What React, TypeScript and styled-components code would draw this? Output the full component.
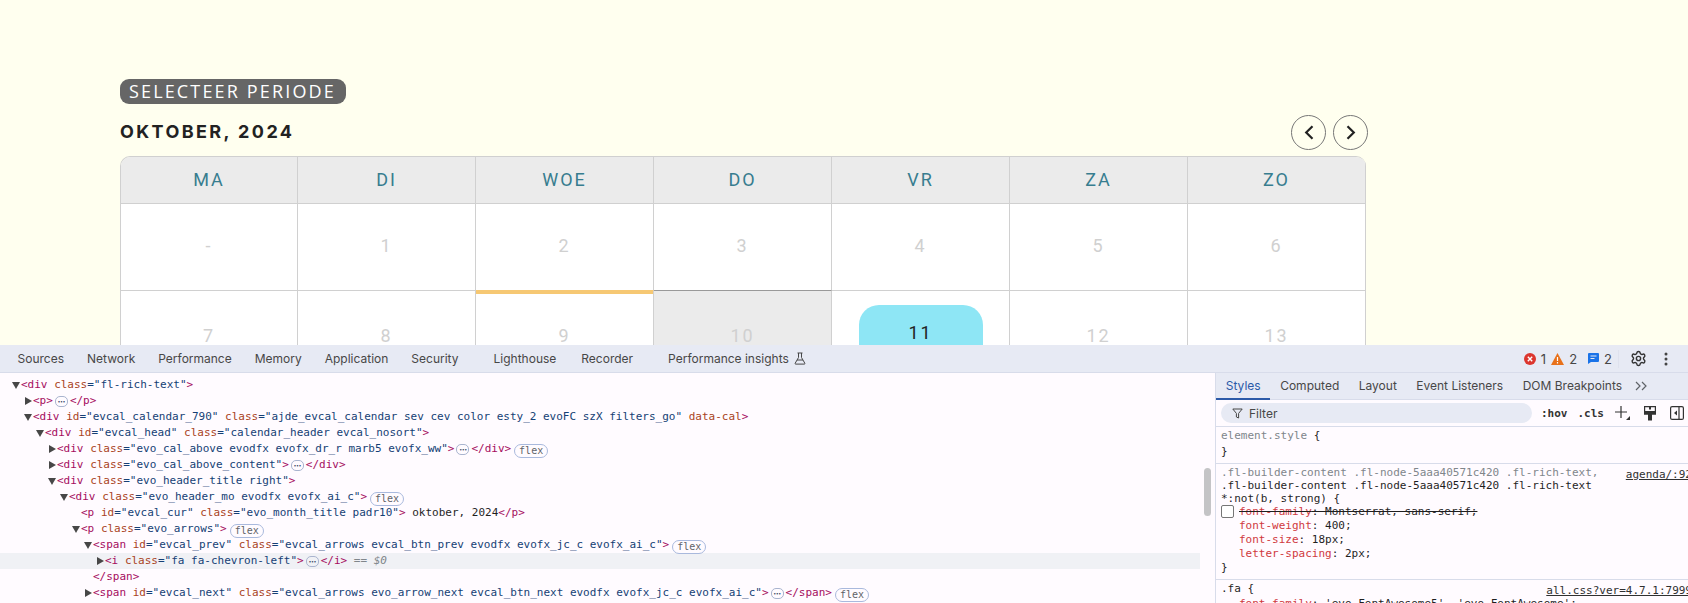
import * as React from 'react';
import styled, { createGlobalStyle } from 'styled-components';
import { Settings } from 'lucide-react';

const GlobalStyle = createGlobalStyle`
    html, body {
        margin: 0;
        padding: 0;
        height: 603px;
        overflow: hidden;
        background: #ffffef;
    }
    * {
        box-sizing: border-box;
    }
`

const days = ['MA', 'DI', 'WOE', 'DO', 'VR', 'ZA', 'ZO'];
const tabs = ['Sources', 'Network', 'Performance', 'Memory', 'Application', 'Security', 'Lighthouse', 'Recorder'];
const tabGaps: Record<string, number> = { Lighthouse: 12, Recorder: 2 };
const sideTabs = ['Styles', 'Computed', 'Layout', 'Event Listeners', 'DOM Breakpoints'];

function Attr({ name, value }: { name: string; value: string }) {
    return <> <AttrName>{name}</AttrName><AttrValue>="{value}"</AttrValue></>;
}

function Dots() {
    return <DotsBadge>···</DotsBadge>;
}

function TreeRow(props: { depth: number; arrow?: 'down' | 'right'; selected?: boolean; children: React.ReactNode }) {
    return (
        <Row $depth={props.depth} $selected={props.selected}>
            <ArrowBox>
                {props.arrow && (
                    <svg width="8" height="8" viewBox="0 0 8 8">
                        <path d={props.arrow === 'down' ? 'M0 1h8L4 8z' : 'M1 0v8l7-4z'} fill="#474747" />
                    </svg>
                )}
            </ArrowBox>
            <RowText>{props.children}</RowText>
        </Row>
    );
}

export default function App() {
    return (
        <Page>
            <GlobalStyle />
            <Site>
                <Pill>SELECTEER PERIODE</Pill>
                <MonthBar>
                    <MonthTitle>OKTOBER, 2024</MonthTitle>
                    <MonthArrows>
                        <RoundButton>
                            <svg width="10" height="15" viewBox="0 0 10 15"><path d="M8.5 1.2 2.2 7.5l6.3 6.3" fill="none" stroke="#222" strokeWidth="2.2" /></svg>
                        </RoundButton>
                        <RoundButton>
                            <svg width="10" height="15" viewBox="0 0 10 15"><path d="M1.5 1.2 7.8 7.5l-6.3 6.3" fill="none" stroke="#222" strokeWidth="2.2" /></svg>
                        </RoundButton>
                    </MonthArrows>
                </MonthBar>
                <Calendar>
                    <HeadRow>
                        {days.map((d) => <HeadCell key={d}>{d}</HeadCell>)}
                    </HeadRow>
                    <Week>
                        {['-', '1', '2', '3', '4', '5', '6'].map((n) => <DayCell key={n} $pad={32}>{n}</DayCell>)}
                    </Week>
                    <Week>
                        <DayCell $pad={35}>7</DayCell>
                        <DayCell $pad={35}>8</DayCell>
                        <DayCell $pad={35} $mark="event">9</DayCell>
                        <DayCell $pad={35} $mark="past">10</DayCell>
                        <DayCell $pad={14}><TodayBlock>11</TodayBlock></DayCell>
                        <DayCell $pad={35}>12</DayCell>
                        <DayCell $pad={35}>13</DayCell>
                    </Week>
                </Calendar>
            </Site>

            <DevTools>
                <Toolbar>
                    {tabs.map((t) => <ToolTab key={t} $gap={tabGaps[t] || 0}>{t}</ToolTab>)}
                    <ToolTab $gap={12}>
                        Performance insights
                        <svg width="12" height="13" viewBox="0 0 12 13" fill="none" stroke="#474747" strokeWidth="1">
                            <path d="M3.5 1h5M4.5 1v4.5L1.2 11.2a.6.6 0 0 0 .5.9h8.6a.6.6 0 0 0 .5-.9L7.5 5.5V1M3 8h6" />
                        </svg>
                    </ToolTab>
                    <StatusGroup>
                        <StatusItem>
                            <svg width="12" height="12" viewBox="0 0 12 12">
                                <circle cx="6" cy="6" r="6" fill="#dc362e" />
                                <path d="M3.8 3.8l4.4 4.4M8.2 3.8 3.8 8.2" stroke="#fff" strokeWidth="1.4" />
                            </svg>
                            1
                        </StatusItem>
                        <StatusItem $gap={5}>
                            <svg width="13" height="12" viewBox="0 0 13 12">
                                <path d="M6.5 0 13 12H0z" fill="#e8711a" />
                                <path d="M6.5 4v4M6.5 9v1.5" stroke="#fff" strokeWidth="1.2" />
                            </svg>
                            2
                        </StatusItem>
                        <StatusItem $gap={11}>
                            <svg width="11" height="11" viewBox="0 0 11 11">
                                <path d="M1 0h9a1 1 0 0 1 1 1v7a1 1 0 0 1-1 1H3l-3 2V1a1 1 0 0 1 1-1z" fill="#1a73e8" />
                                <path d="M2.5 3h6M2.5 5.5h4" stroke="#e6e9f3" strokeWidth="1" />
                            </svg>
                            2
                        </StatusItem>
                        <ToolDivider />
                        <Settings size={17} color="#333" strokeWidth={2} />
                        <KebabIcon width="4" height="14" viewBox="0 0 4 14">
                            <circle cx="2" cy="2" r="1.5" fill="#444" />
                            <circle cx="2" cy="7" r="1.5" fill="#444" />
                            <circle cx="2" cy="12" r="1.5" fill="#444" />
                        </KebabIcon>
                    </StatusGroup>
                </Toolbar>

                <Panels>
                    <Elements>
                        <TreeRow depth={0} arrow="down"><Tag>&lt;div</Tag><Attr name="class" value="fl-rich-text" /><Tag>&gt;</Tag></TreeRow>
                        <TreeRow depth={1} arrow="right"><Tag>&lt;p&gt;</Tag><Dots /><Tag>&lt;/p&gt;</Tag></TreeRow>
                        <TreeRow depth={1} arrow="down"><Tag>&lt;div</Tag><Attr name="id" value="evcal_calendar_790" /><Attr name="class" value="ajde_evcal_calendar sev cev color esty_2 evoFC szX filters_go" /> <AttrName>data-cal</AttrName><Tag>&gt;</Tag></TreeRow>
                        <TreeRow depth={2} arrow="down"><Tag>&lt;div</Tag><Attr name="id" value="evcal_head" /><Attr name="class" value="calendar_header evcal_nosort" /><Tag>&gt;</Tag></TreeRow>
                        <TreeRow depth={3} arrow="right"><Tag>&lt;div</Tag><Attr name="class" value="evo_cal_above evodfx evofx_dr_r marb5 evofx_ww" /><Tag>&gt;</Tag><Dots /><Tag>&lt;/div&gt;</Tag><FlexBadge>flex</FlexBadge></TreeRow>
                        <TreeRow depth={3} arrow="right"><Tag>&lt;div</Tag><Attr name="class" value="evo_cal_above_content" /><Tag>&gt;</Tag><Dots /><Tag>&lt;/div&gt;</Tag></TreeRow>
                        <TreeRow depth={3} arrow="down"><Tag>&lt;div</Tag><Attr name="class" value="evo_header_title right" /><Tag>&gt;</Tag></TreeRow>
                        <TreeRow depth={4} arrow="down"><Tag>&lt;div</Tag><Attr name="class" value="evo_header_mo evodfx evofx_ai_c" /><Tag>&gt;</Tag><FlexBadge>flex</FlexBadge></TreeRow>
                        <TreeRow depth={5}><Tag>&lt;p</Tag><Attr name="id" value="evcal_cur" /><Attr name="class" value="evo_month_title padr10" /><Tag>&gt;</Tag><PlainText> oktober, 2024</PlainText><Tag>&lt;/p&gt;</Tag></TreeRow>
                        <TreeRow depth={5} arrow="down"><Tag>&lt;p</Tag><Attr name="class" value="evo_arrows" /><Tag>&gt;</Tag><FlexBadge>flex</FlexBadge></TreeRow>
                        <TreeRow depth={6} arrow="down"><Tag>&lt;span</Tag><Attr name="id" value="evcal_prev" /><Attr name="class" value="evcal_arrows evcal_btn_prev evodfx evofx_jc_c evofx_ai_c" /><Tag>&gt;</Tag><FlexBadge>flex</FlexBadge></TreeRow>
                        <TreeRow depth={7} arrow="right" selected><Tag>&lt;i</Tag><Attr name="class" value="fa fa-chevron-left" /><Tag>&gt;</Tag><Dots /><Tag>&lt;/i&gt;</Tag><SelectedHint> == $0</SelectedHint></TreeRow>
                        <TreeRow depth={6}><Tag>&lt;/span&gt;</Tag></TreeRow>
                        <TreeRow depth={6} arrow="right"><Tag>&lt;span</Tag><Attr name="id" value="evcal_next" /><Attr name="class" value="evcal_arrows evo_arrow_next evcal_btn_next evodfx evofx_jc_c evofx_ai_c" /><Tag>&gt;</Tag><Dots /><Tag>&lt;/span&gt;</Tag><FlexBadge>flex</FlexBadge></TreeRow>
                    </Elements>
                    <ScrollTrack><ScrollThumb /></ScrollTrack>

                    <Sidebar>
                        <SideTabs>
                            {sideTabs.map((t) => <SideTab key={t} $active={t === 'Styles'}>{t}</SideTab>)}
                            <MoreTabs>
                                <svg width="13" height="10" viewBox="0 0 13 10" fill="none" stroke="#5f6368" strokeWidth="1.2"><path d="M1 1l4 4-4 4M7 1l4 4-4 4" /></svg>
                            </MoreTabs>
                        </SideTabs>
                        <FilterBar>
                            <FilterField>
                                <svg width="11" height="11" viewBox="0 0 11 11" fill="none" stroke="#474747" strokeWidth="1"><path d="M.8 1h9.4L6.6 5.4V10L4.4 9V5.4z" /></svg>
                                Filter
                            </FilterField>
                            <FilterAction>:hov</FilterAction>
                            <FilterAction>.cls</FilterAction>
                            <FilterIcons>
                                <svg width="15" height="14" viewBox="0 0 15 14" fill="none" stroke="#333" strokeWidth="1.2">
                                    <path d="M6 0v12M0 6h12" />
                                    <path d="M15 10v4h-4z" fill="#333" stroke="none" />
                                </svg>
                                <svg width="12" height="15" viewBox="0 0 12 15">
                                    <path d="M.6.6h10.8V8H.6z" fill="none" stroke="#333" strokeWidth="1.2" />
                                    <path d="M0 5h12v3.5H8v6H4v-6H0zM5 1h2v2.5H5z" fill="#333" />
                                </svg>
                                <svg width="14" height="14" viewBox="0 0 14 14" fill="none" stroke="#333" strokeWidth="1.2">
                                    <rect x=".6" y=".6" width="12.8" height="12.8" rx="1.5" />
                                    <path d="M9 1v12" />
                                    <path d="M7 4.5v5L4 7z" fill="#333" stroke="none" />
                                </svg>
                            </FilterIcons>
                        </FilterBar>

                        <RuleBlock $pad="1px 0 3px">
                            <Line $h={16}><Faded>element.style</Faded> {'{'}</Line>
                            <Line $h={16}>{'}'}</Line>
                        </RuleBlock>
                        <RuleBlock $pad="2px 0 4px">
                            <Line $h={13}>
                                <SourceLink>agenda/:92</SourceLink>
                                <Faded>.fl-builder-content .fl-node-5aaa40571c420 .fl-rich-text,</Faded>
                            </Line>
                            <Line $h={13}>.fl-builder-content .fl-node-5aaa40571c420 .fl-rich-text</Line>
                            <Line $h={13}>*:not(b, strong) {'{'}</Line>
                            <Line $h={14}>
                                <CheckBox />
                                <Struck><PropName>font-family</PropName>: Montserrat, sans-serif;</Struck>
                            </Line>
                            <Decl><PropName>font-weight</PropName>: 400;</Decl>
                            <Decl><PropName>font-size</PropName>: 18px;</Decl>
                            <Decl><PropName>letter-spacing</PropName>: 2px;</Decl>
                            <Line $h={14}>{'}'}</Line>
                        </RuleBlock>
                        <RuleBlock $pad="1px 0 0">
                            <Line $h={16}>
                                <SourceLink>all.css?ver=4.7.1:7999</SourceLink>
                                .fa {'{'}
                            </Line>
                            <Decl><PropName>font-family</PropName>: 'evo_FontAwesome5', 'evo_FontAwesome';</Decl>
                        </RuleBlock>
                    </Sidebar>
                </Panels>
            </DevTools>
        </Page>
    );
}

const Page = styled.div`
    width: 1688px;
    height: 603px;
    display: flex;
    flex-direction: column;
    overflow: hidden;
`

const Site = styled.section`
    height: 345px;
    flex: none;
    overflow: hidden;
    padding: 79px 0 0 120px;
    background: #ffffef;
`

const Pill = styled.div`
    width: 226px;
    height: 25px;
    line-height: 25px;
    padding-left: 9px;
    border-radius: 9px;
    background: #666;
    color: #fff;
    font-family: "Open Sans", sans-serif;
    font-size: 18px;
    font-weight: 500;
    letter-spacing: 2.15px;
    white-space: nowrap;
`

const MonthBar = styled.div`
    width: 1248px;
    margin-top: 11px;
    height: 35px;
    display: flex;
    align-items: center;
    justify-content: space-between;
`

const MonthTitle = styled.h2`
    margin: 0 0 2px;
    font-family: Inter, sans-serif;
    font-size: 18px;
    font-weight: 700;
    letter-spacing: 2.4px;
    color: #222;
`

const MonthArrows = styled.div`
    display: flex;
    gap: 7px;
`

const RoundButton = styled.span`
    width: 35px;
    height: 35px;
    display: flex;
    align-items: center;
    justify-content: center;
    border: 1px solid #777;
    border-radius: 50%;
`

const Calendar = styled.div`
    width: 1246px;
    margin-top: 6px;
    border-top: 1px solid #d0d0d0;
    border-left: 1px solid #d0d0d0;
    border-radius: 10px 10px 0 0;
    overflow: hidden;
`

const HeadRow = styled.div`
    display: grid;
    grid-template-columns: 177px repeat(6, 178px);
    height: 46px;
`

const HeadCell = styled.div`
    display: flex;
    align-items: center;
    justify-content: center;
    padding-bottom: 2px;
    background: #ebebeb;
    border-right: 1px solid #d0d0d0;
    color: #377d8f;
    font-family: Roboto, sans-serif;
    font-size: 18px;
    letter-spacing: 2px;
`

const Week = styled.div`
    display: grid;
    grid-template-columns: 177px repeat(6, 178px);
    height: 87px;
`

const DayCell = styled.div<{ $pad: number; $mark?: 'event' | 'past' }>`
    padding-top: ${(p) => p.$pad}px;
    text-align: center;
    line-height: 20px;
    background: ${(p) => (p.$mark === 'past' ? '#ebebeb' : '#fff')};
    border-top: 1px solid ${(p) => (p.$mark === 'event' ? '#f6c873' : p.$mark === 'past' ? '#999' : '#d0d0d0')};
    border-right: 1px solid #d0d0d0;
    box-shadow: ${(p) => (p.$mark === 'event' ? 'inset 0 3px 0 #f6c873' : 'none')};
    color: #d0d0d0;
    font-family: Roboto, sans-serif;
    font-size: 18px;
    letter-spacing: 2px;
`

const TodayBlock = styled.div`
    width: 124px;
    height: 72px;
    margin: 0 auto;
    padding-top: 18px;
    border-radius: 20px;
    background: #8ee6f5;
    color: #222;
`

const DevTools = styled.section`
    flex: 1;
    min-height: 0;
    display: flex;
    flex-direction: column;
    background: #fffbff;
    font-family: Inter, sans-serif;
`

const Toolbar = styled.div`
    height: 28px;
    flex: none;
    display: flex;
    align-items: center;
    padding-left: 6px;
    background: #e7eaf4;
    border-bottom: 1px solid #d8dcea;
`

const ToolTab = styled.span<{ $gap: number }>`
    display: flex;
    align-items: center;
    gap: 5px;
    padding: 0 11.5px;
    margin-left: ${(p) => p.$gap}px;
    color: #474747;
    font-size: 12px;
    white-space: nowrap;
`

const StatusGroup = styled.div`
    margin-left: auto;
    display: flex;
    align-items: center;
    padding-right: 20px;
`

const StatusItem = styled.span<{ $gap?: number }>`
    display: flex;
    align-items: center;
    gap: 5px;
    margin-left: ${(p) => p.$gap || 0}px;
    color: #474747;
    font-size: 13px;
`

const ToolDivider = styled.span`
    width: 1px;
    height: 18px;
    margin: 0 11px 0 6px;
    background: #dfe2ee;
`

const KebabIcon = styled.svg`
    margin-left: 17px;
`

const Panels = styled.div`
    flex: 1;
    min-height: 0;
    display: flex;
`

const Elements = styled.div`
    width: 1200px;
    flex: none;
    padding-top: 4px;
    overflow: hidden;
    font-family: "DejaVu Sans Mono", monospace;
    font-size: 11px;
`

const Row = styled.div<{ $depth: number; $selected?: boolean }>`
    height: 16px;
    display: flex;
    align-items: center;
    padding-left: ${(p) => 12 + p.$depth * 12}px;
    background: ${(p) => (p.$selected ? '#f0f1f5' : 'transparent')};
    color: #1f1f1f;
`

const RowText = styled.span`
    white-space: pre;
    line-height: 16px;
`

const ArrowBox = styled.span`
    width: 9px;
    flex: none;
    display: flex;
    align-items: center;
`

const Tag = styled.span`
    color: #a50d5e;
`

const AttrName = styled.span`
    color: #a9431e;
`

const AttrValue = styled.span`
    color: #153f75;
`

const PlainText = styled.span`
    color: #1f1f1f;
`

const SelectedHint = styled.span`
    color: #80868b;
    font-style: italic;
`

const DotsBadge = styled.span`
    width: 13px;
    height: 11px;
    margin: 0 2px;
    display: inline-flex;
    align-items: center;
    justify-content: center;
    vertical-align: -1px;
    border: 1px solid #a9b4cf;
    border-radius: 5px;
    color: #3c4a66;
    font-family: Inter, sans-serif;
    font-size: 9px;
    font-weight: 700;
    line-height: 1;
    letter-spacing: -0.5px;
`

const FlexBadge = styled.span`
    width: 34px;
    height: 14px;
    margin-left: 3px;
    display: inline-flex;
    align-items: center;
    justify-content: center;
    vertical-align: -2px;
    border: 1px solid #a9b9dd;
    border-radius: 7px;
    color: #5f6368;
    font-size: 10px;
`

const ScrollTrack = styled.div`
    width: 16px;
    flex: none;
    padding: 95px 4px 0;
    border-right: 1px solid #d8dcea;
`

const ScrollThumb = styled.div`
    height: 48px;
    border-radius: 4px;
    background: #c4c4c6;
`

const Sidebar = styled.aside`
    flex: 1;
    min-width: 0;
    overflow: hidden;
`

const SideTabs = styled.div`
    height: 27px;
    display: flex;
    background: #e7eaf4;
    border-bottom: 1px solid #d8dcea;
`

const SideTab = styled.span<{ $active?: boolean }>`
    height: 27px;
    display: flex;
    align-items: center;
    padding: 0 9.75px;
    font-size: 12px;
    white-space: nowrap;
    color: ${(p) => (p.$active ? '#2c5aa8' : '#474747')};
    border-bottom: 2px solid ${(p) => (p.$active ? '#2c5aa8' : 'transparent')};
`

const MoreTabs = styled.span`
    display: flex;
    align-items: center;
    padding-left: 3px;
`

const FilterBar = styled.div`
    height: 27px;
    display: flex;
    align-items: center;
    padding-left: 5px;
    border-bottom: 1px solid #d8dcea;
`

const FilterField = styled.div`
    width: 311px;
    height: 20px;
    flex: none;
    display: flex;
    align-items: center;
    gap: 6px;
    padding-left: 11px;
    margin-right: 9px;
    border-radius: 10px;
    background: #e7eaf4;
    color: #474747;
    font-size: 12px;
`

const FilterAction = styled.span`
    flex: none;
    margin-right: 10px;
    color: #333;
    font-family: "DejaVu Sans Mono", monospace;
    font-size: 11px;
    font-weight: 700;
`

const FilterIcons = styled.span`
    flex: none;
    display: flex;
    align-items: center;
    gap: 14px;
    margin-left: 1px;
`

const RuleBlock = styled.div<{ $pad: string }>`
    padding: ${(p) => p.$pad};
    border-bottom: 1px solid #d8dcea;
    font-family: "DejaVu Sans Mono", monospace;
    font-size: 11px;
    color: #1f1f1f;
    &:last-child {
        border-bottom: none;
    }
`

const Line = styled.div<{ $h: number }>`
    height: ${(p) => p.$h}px;
    line-height: ${(p) => p.$h}px;
    padding-left: 5px;
    white-space: pre;
`

const Decl = styled.div`
    height: 14px;
    line-height: 14px;
    padding-left: 23px;
    white-space: pre;
`

const Faded = styled.span`
    color: #80868b;
`

const SourceLink = styled.a`
    float: right;
    margin: 2px -4px 0 0;
    color: #303030;
    text-decoration: underline;
`

const CheckBox = styled.span`
    display: inline-block;
    width: 13px;
    height: 13px;
    margin-right: 5px;
    vertical-align: -3px;
    border: 1px solid #767676;
    border-radius: 2px;
    background: #fff;
`

const Struck = styled.span`
    text-decoration: line-through;
`

const PropName = styled.span`
    color: #d0393e;
`
